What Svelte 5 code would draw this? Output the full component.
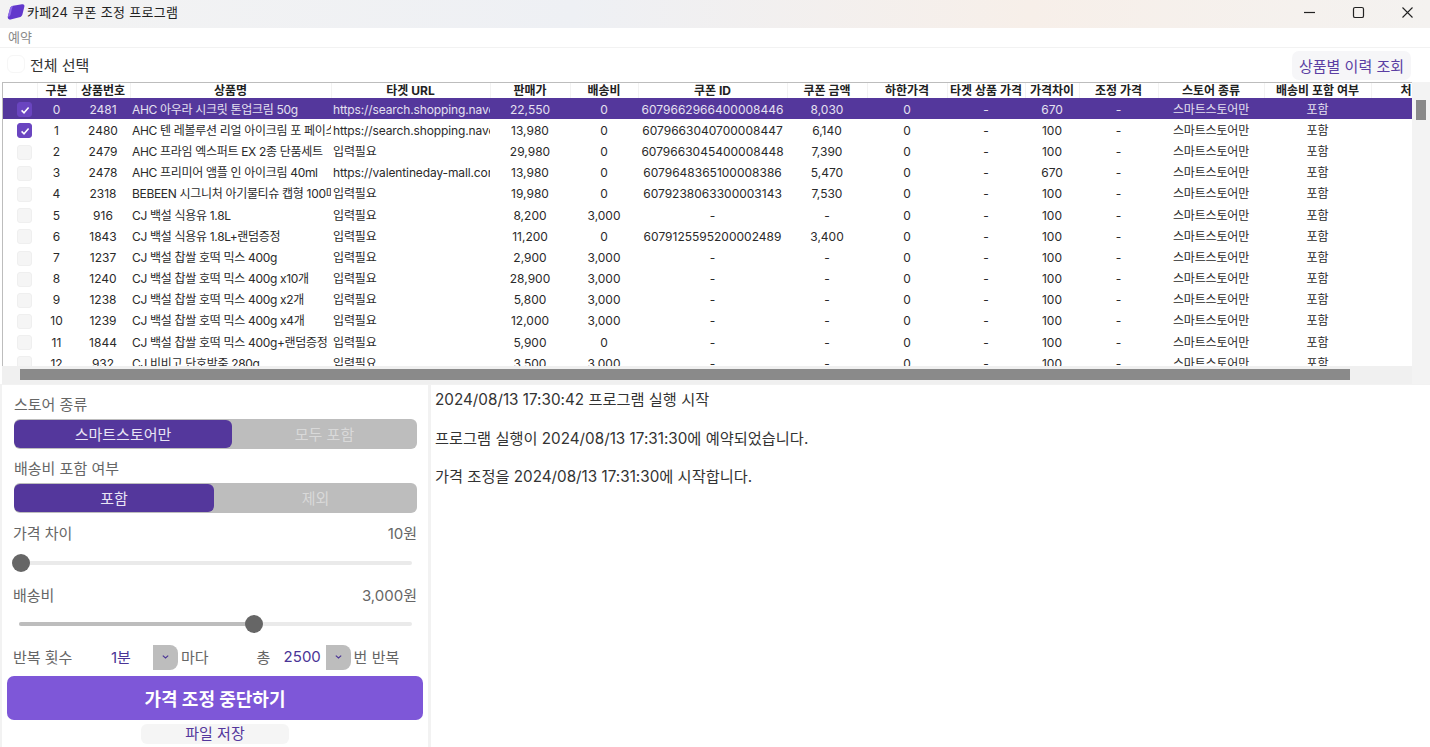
<script lang="ts">
  const columns = [
    { key: 'check', label: '', width: 34 },
    { key: 'idx', label: '구분', width: 39 },
    { key: 'no', label: '상품번호', width: 54 },
    { key: 'name', label: '상품명', width: 201 },
    { key: 'url', label: '타겟 URL', width: 159 },
    { key: 'price', label: '판매가', width: 80 },
    { key: 'ship', label: '배송비', width: 68 },
    { key: 'coupon', label: '쿠폰 ID', width: 149 },
    { key: 'amount', label: '쿠폰 금액', width: 80 },
    { key: 'floor', label: '하한가격', width: 80 },
    { key: 'target', label: '타겟 상품 가격', width: 78 },
    { key: 'diff', label: '가격차이', width: 54 },
    { key: 'adjust', label: '조정 가격', width: 79 },
    { key: 'store', label: '스토어 종류', width: 106 },
    { key: 'shipIn', label: '배송비 포함 여부', width: 107 },
    { key: 'more', label: '처', width: 70 }
  ];

  const need = '입력필요';
  const shop = 'https://search.shopping.naver.com/catalog';
  const rows = [
    [2481, 'AHC 아우라 시크릿 톤업크림 50g', shop, '22,550', '0', '6079662966400008446', '8,030', 670, true],
    [2480, 'AHC 텐 레볼루션 리얼 아이크림 포 페이스 30ml', shop, '13,980', '0', '6079663040700008447', '6,140', 100, true],
    [2479, 'AHC 프라임 엑스퍼트 EX 2종 단품세트', need, '29,980', '0', '6079663045400008448', '7,390', 100, false],
    [2478, 'AHC 프리미어 앰플 인 아이크림 40ml', 'https://valentineday-mall.com/product', '13,980', '0', '6079648365100008386', '5,470', 670, false],
    [2318, 'BEBEEN 시그니처 아기물티슈 캡형 100매', need, '19,980', '0', '6079238063300003143', '7,530', 100, false],
    [916, 'CJ 백설 식용유 1.8L', need, '8,200', '3,000', '-', '-', 100, false],
    [1843, 'CJ 백설 식용유 1.8L+랜덤증정', need, '11,200', '0', '6079125595200002489', '3,400', 100, false],
    [1237, 'CJ 백설 찹쌀 호떡 믹스 400g', need, '2,900', '3,000', '-', '-', 100, false],
    [1240, 'CJ 백설 찹쌀 호떡 믹스 400g x10개', need, '28,900', '3,000', '-', '-', 100, false],
    [1238, 'CJ 백설 찹쌀 호떡 믹스 400g x2개', need, '5,800', '3,000', '-', '-', 100, false],
    [1239, 'CJ 백설 찹쌀 호떡 믹스 400g x4개', need, '12,000', '3,000', '-', '-', 100, false],
    [1844, 'CJ 백설 찹쌀 호떡 믹스 400g+랜덤증정', need, '5,900', '0', '-', '-', 100, false],
    [932, 'CJ 비비고 단호박죽 280g', need, '3,500', '3,000', '-', '-', 100, false]
  ] as const;

  const tableWidth = columns.reduce((sum, c) => sum + c.width, 0);
  const logs = [
    '2024/08/13 17:30:42 프로그램 실행 시작',
    '프로그램 실행이 2024/08/13 17:31:30에 예약되었습니다.',
    '가격 조정을 2024/08/13 17:31:30에 시작합니다.'
  ];
</script>

<div class="window">
  <header class="titlebar">
    <svg class="logo" viewBox="0 0 18 16" width="18" height="16">
      <path d="M.8 12.6 L3 4.6 C3.4 3 4.4 2.2 6 1.8 L15 .3 C16.8 0 17.8 1 17.4 2.6 L15.4 10.4 C15 12 14 12.8 12.4 13.2 L3.6 15.6 C1.8 16 .4 14.4 .8 12.6 Z" fill="#6238cc" />
      <path d="M.8 12.6 L3 4.6 C3.4 3 4.4 2.2 6 1.8 C5 4 4.4 6.6 3.9 9.4 C3.5 11.6 2.4 13.2 .8 12.6 Z" fill="#8f6be8" />
    </svg>
    <span class="title">카페24 쿠폰 조정 프로그램</span>
    <div class="winbtns">
      <svg viewBox="0 0 46 28" width="46" height="28"><path d="M17 12.5 H28" stroke="#222" stroke-width="1.2" /></svg>
      <svg viewBox="0 0 46 28" width="46" height="28"><rect x="17.5" y="7.5" width="10" height="10" rx="1.6" fill="none" stroke="#222" stroke-width="1.2" /></svg>
      <svg viewBox="0 0 46 28" width="46" height="28"><path d="M17.5 7.5 L27.5 17.5 M27.5 7.5 L17.5 17.5" stroke="#222" stroke-width="1.1" /></svg>
    </div>
  </header>

  <nav class="menu">예약</nav>

  <div class="toolbar">
    <label class="select-all"><span class="round-check"></span>전체 선택</label>
    <button class="history">상품별 이력 조회</button>
  </div>

  <section class="grid-wrap">
    <div class="grid-main">
      <div class="grid-view">
        <table style="width: {tableWidth}px">
          <colgroup>
            {#each columns as col}
              <col style="width: {col.width}px" />
            {/each}
          </colgroup>
          <thead>
            <tr>
              {#each columns as col}
                <th>{col.label}</th>
              {/each}
            </tr>
          </thead>
          <tbody>
            {#each rows as row, i}
              <tr class:selected={i === 0}>
                <td class="check-cell"><span class="check" class:on={row[8]}>
                  {#if row[8]}
                    <svg viewBox="0 0 12 12" width="12" height="12"><path d="M2.6 6.4 L5 8.8 L9.6 3.4" fill="none" stroke="#fff" stroke-width="1.5" /></svg>
                  {/if}
                </span></td>
                <td>{i}</td>
                <td>{row[0]}</td>
                <td class="name">{row[1]}</td>
                <td class="url">{row[2]}</td>
                <td>{row[3]}</td>
                <td>{row[4]}</td>
                <td>{row[5]}</td>
                <td>{row[6]}</td>
                <td>0</td>
                <td>-</td>
                <td>{row[7]}</td>
                <td>-</td>
                <td class="store">스마트스토어만</td>
                <td>포함</td>
                <td></td>
              </tr>
            {/each}
          </tbody>
        </table>
      </div>
      <div class="hscroll"><div class="hthumb"></div></div>
    </div>
    <div class="vscroll"><div class="vthumb"></div></div>
  </section>

  <div class="bottom">
    <aside class="panel">
      <div class="label first">스토어 종류</div>
      <div class="segment">
        <button class="seg on store-on">스마트스토어만</button>
        <button class="seg">모두 포함</button>
      </div>
      <div class="label second">배송비 포함 여부</div>
      <div class="segment">
        <button class="seg on ship-on">포함</button>
        <button class="seg">제외</button>
      </div>
      <div class="label-row diff-row"><span>가격 차이</span><span>10원</span></div>
      <div class="slider">
        <span class="knob"></span>
      </div>
      <div class="label-row ship-row"><span>배송비</span><span>3,000원</span></div>
      <div class="slider ship-slider">
        <span class="fill"></span>
        <span class="knob"></span>
      </div>
      <div class="repeat">
        <span class="rep-label">반복 횟수</span>
        <span class="value every">1분</span>
        <span class="drop"><svg viewBox="0 0 10 6" width="9" height="6"><path d="M2 1.5 L5 4 L8 1.5" fill="none" stroke="#4a3496" stroke-width="1.3" /></svg></span>
        <span class="unit">마다</span>
        <span class="total">총</span>
        <span class="value count">2500</span>
        <span class="drop"><svg viewBox="0 0 10 6" width="9" height="6"><path d="M2 1.5 L5 4 L8 1.5" fill="none" stroke="#4a3496" stroke-width="1.3" /></svg></span>
        <span class="unit">번 반복</span>
      </div>
      <button class="stop">가격 조정 중단하기</button>
      <button class="save">파일 저장</button>
    </aside>
    <main class="log">
      {#each logs as line}
        <p>{line}</p>
      {/each}
    </main>
  </div>
</div>

<style>
  :global(body) {
    margin: 0;
    background: #fff;
  }

  .window {
    width: 1430px;
    height: 747px;
    overflow: hidden;
    display: flex;
    flex-direction: column;
    font-family: Inter, 'Noto Sans CJK KR', sans-serif;
    color: #222;
    background: #fff;
  }

  button {
    font-family: inherit;
    border: none;
    padding: 0;
  }

  .titlebar {
    height: 28px;
    flex: none;
    display: flex;
    align-items: center;
    padding-left: 7px;
    background: linear-gradient(90deg, #f3f3f3 0%, #eef0f4 40%, #f7efe9 72%, #f4f2f0 100%);
  }

  .logo {
    flex: none;
    margin-right: 2px;
    margin-bottom: 4px;
  }

  .title {
    font-size: 13px;
    color: #222;
    letter-spacing: 0.3px;
    margin-bottom: 6px;
  }

  .winbtns {
    margin-left: auto;
    display: flex;
    margin-right: -1px;
    gap: 3px;
  }

  .menu {
    height: 20px;
    flex: none;
    box-sizing: border-box;
    padding-left: 8px;
    font-size: 13px;
    line-height: 19px;
    color: #8a8a8a;
    border-bottom: 1px solid #f2f2f2;
  }

  .toolbar {
    height: 34px;
    flex: none;
    display: flex;
    align-items: center;
    justify-content: space-between;
    padding: 0 19px 0 7px;
  }

  .select-all {
    display: flex;
    align-items: center;
    gap: 5px;
    font-size: 15px;
    color: #333;
    margin-bottom: 2px;
  }

  .round-check {
    width: 16px;
    height: 16px;
    border-radius: 6px;
    background: #fff;
    border: 1px solid #f6f6f6;
  }

  .history {
    height: 29px;
    width: 119px;
    border-radius: 7px;
    background: #f6f6f8;
    color: #5b3fa3;
    font-size: 15px;
  }

  .grid-wrap {
    height: 302px;
    flex: none;
    display: flex;
    padding-left: 2px;
    background: #fff;
  }

  .grid-main {
    width: 1410px;
    display: flex;
    flex-direction: column;
  }

  .grid-view {
    height: 284px;
    overflow: hidden;
    box-sizing: border-box;
    border-top: 1px solid #bdbdbd;
    border-left: 1px solid #bdbdbd;
  }

  table {
    border-collapse: collapse;
    table-layout: fixed;
    font-size: 12px;
  }

  th {
    height: 15px;
    padding: 0;
    font-weight: 700;
    font-size: 12px;
    line-height: 15px;
    color: #222;
    white-space: nowrap;
    overflow: hidden;
    border-right: 1px solid #f2f2f2;
  }

  td {
    height: 21.2px;
    padding: 1px 2px 0;
    box-sizing: border-box;
    text-align: center;
    white-space: nowrap;
    overflow: hidden;
    color: #2a2a2a;
    line-height: 15px;
  }

  td.check-cell {
    padding-left: 11px;
  }

  td.name {
    text-align: left;
    letter-spacing: -0.32px;
  }

  td.url {
    text-align: left;
    letter-spacing: -0.12px;
    padding-right: 0;
  }

  td.store {
    letter-spacing: -0.15px;
  }

  tr.selected td {
    background: #54379c;
    color: #e4e0f0;
  }

  .check {
    display: inline-flex;
    align-items: center;
    justify-content: center;
    vertical-align: middle;
    width: 13px;
    height: 13px;
    border-radius: 3px;
    background: #f5f5f5;
    border: 1px solid #efefef;
  }

  .check.on {
    background: #6a45c0;
    border-color: #6a45c0;
  }

  .hscroll {
    height: 18px;
    background: #f0f0f0;
    padding-top: 3px;
    box-sizing: border-box;
  }

  .hthumb {
    width: 1330px;
    height: 11px;
    margin-left: 18px;
    background: #8a8a8a;
  }

  .vscroll {
    width: 18px;
    background: #f3f3f3;
    padding-top: 18px;
    box-sizing: border-box;
  }

  .vthumb {
    width: 10px;
    height: 20px;
    margin-left: 4px;
    background: #8a8a8a;
  }

  .bottom {
    flex: 1;
    display: flex;
    background: #f2f2f2;
    padding-top: 1px;
    min-height: 0;
  }

  .panel {
    width: 426px;
    margin-left: 2px;
    margin-right: 3px;
    flex: none;
    box-sizing: border-box;
    background: #fff;
    padding: 0 5px;
    display: flex;
    flex-direction: column;
    color: #666;
  }

  .label {
    font-size: 15px;
    line-height: 20px;
    padding-left: 7px;
    color: #666;
  }

  .label.first {
    margin-top: 10px;
  }

  .label.second {
    margin-top: 10px;
  }

  .segment {
    display: flex;
    height: 30px;
    margin: 4px 6px 0 7px;
    background: #bdbdbd;
    border-radius: 6px;
    overflow: hidden;
  }

  .seg {
    flex: 1;
    background: transparent;
    color: #d9d9d9;
    font-size: 15px;
    padding-bottom: 2px;
  }

  .seg.on {
    flex: none;
    background: #54379c;
    color: #e9e5f5;
    border-radius: 6px;
    margin: 1px 0 1px 0;
  }

  .store-on {
    width: 218px;
  }

  .ship-on {
    width: 200px;
  }

  .label-row {
    display: flex;
    justify-content: space-between;
    font-size: 15px;
    line-height: 20px;
    padding: 0 6px;
    color: #666;
  }

  .diff-row {
    margin-top: 11px;
  }

  .ship-row {
    margin-top: 21px;
  }

  .slider {
    position: relative;
    height: 4px;
    margin: 17px 11px 0 12px;
    border-radius: 2px;
    background: #eaeaea;
  }

  .fill {
    display: block;
    width: 235px;
    height: 4px;
    border-radius: 2px;
    background: #bdbdbd;
  }

  /* knob sits on top of the slider track */
  .knob {
    position: absolute;
    top: -7px;
    left: -7px;
    width: 18px;
    height: 18px;
    border-radius: 50%;
    background: #666;
  }

  .ship-slider {
    margin-top: 16px;
  }

  .ship-slider .knob {
    left: 226px;
  }

  .repeat {
    display: flex;
    align-items: center;
    height: 26px;
    margin-top: 18px;
    padding-left: 6px;
    font-size: 15px;
    color: #666;
  }

  .rep-label,
  .value,
  .unit,
  .total {
    margin-bottom: 2px;
  }

  .rep-label {
    width: 98px;
  }

  .value {
    color: #4a3496;
    font-size: 15px;
  }

  .every {
    width: 42px;
  }

  .drop {
    width: 25px;
    height: 25px;
    background: #bdbdbd;
    border-radius: 0 8px 8px 0;
    display: flex;
    align-items: center;
    justify-content: center;
  }

  .unit {
    margin-left: 3px;
  }

  .total {
    margin-left: 48px;
    width: 27px;
  }

  .count {
    width: 42px;
  }

  .stop {
    height: 44px;
    margin-top: 6px;
    flex: none;
    width: 416px;
    border-radius: 7px;
    background: #7e57d8;
    color: #fff;
    font-size: 18px;
    font-weight: 700;
  }

  .save {
    width: 148px;
    height: 20px;
    flex: none;
    margin: 4px auto 0;
    border-radius: 6px;
    background: #f5f5f5;
    color: #54379c;
    font-size: 15px;
    line-height: 20px;
  }

  .log {
    flex: 1;
    background: #fff;
    padding: 5px 4px;
    font-size: 15.25px;
    color: #333;
  }

  .log p {
    margin: 0 0 18.5px;
    line-height: 20px;
  }
</style>
